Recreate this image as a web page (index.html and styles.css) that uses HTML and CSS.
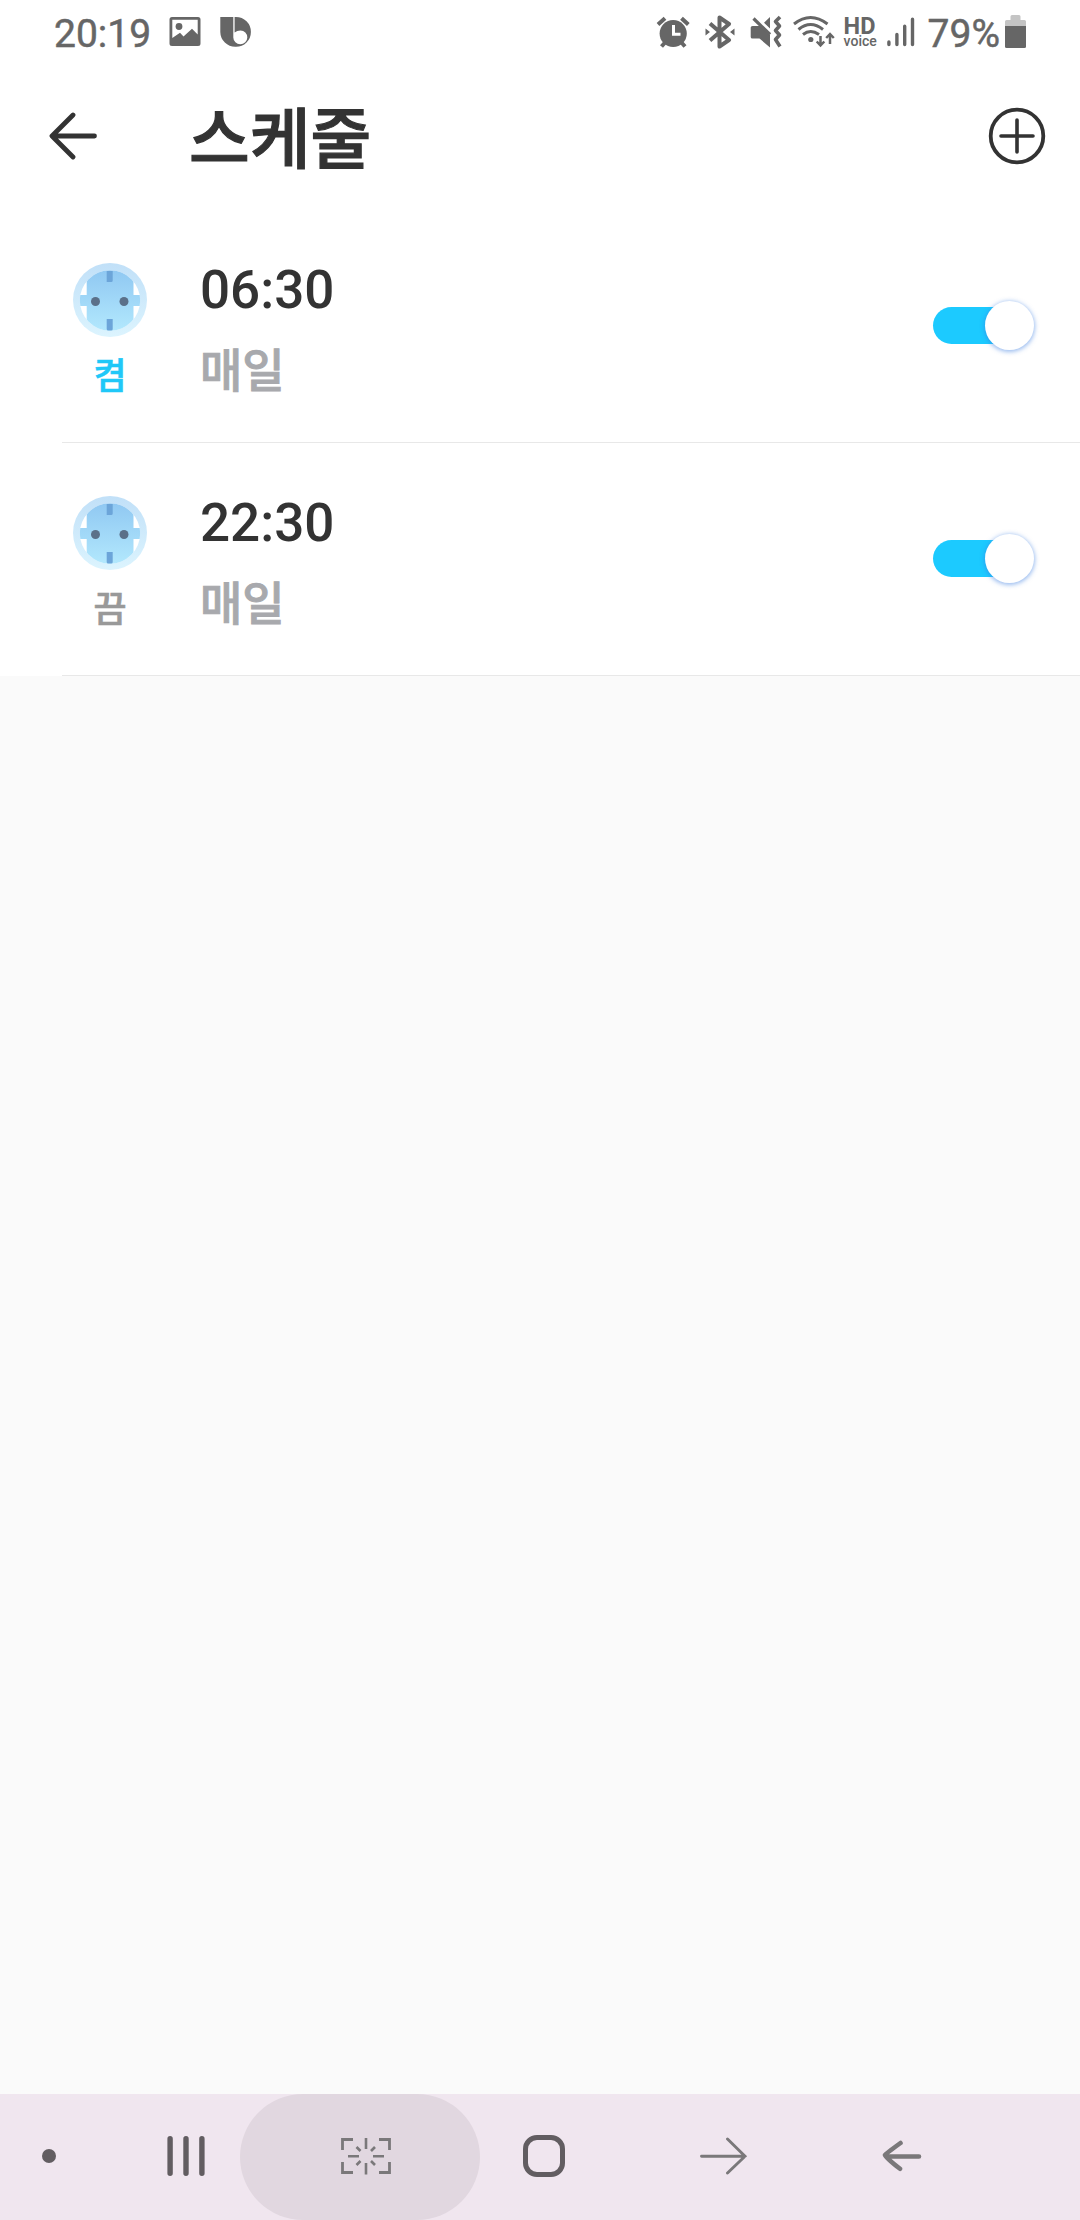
FILE: index.html
```html
<!DOCTYPE html>
<html lang="ko">
<head>
<meta charset="utf-8">
<title>스케줄</title>
<link rel="stylesheet" href="styles.css">
</head>
<body>
<div class="screen">
  <div class="status">
    <span class="status-text clock">20:19</span>
    <svg class="ic-image" width="32" height="30" viewBox="0 0 32 30"><path fill="#666" fill-rule="evenodd" d="M3 0H29Q31.500 0 31.500 2.500V26.500Q31.500 29 29 29H3Q.5 29 .5 26.500V2.500Q.5 0 3 0ZM3.300 2.800V21L11 15.700 14.500 19.500 23 11.800 28.700 17.500V2.800Z"/><circle cx="10" cy="9.500" r="3.400" fill="#666"/></svg>
    <svg class="ic-bixby" width="32" height="30" viewBox="0 0 32 30"><path fill="#666" d="M.3 0H16A14.900 14.900 0 0 1 16 29.800H15.500A15 15 0 0 1 .3 15Z"/><path fill="#fff" d="M13.300 0H14.600V15.500Q17 13.500 20.500 13.500A7 6.900 0 1 1 13.300 20.500Z"/></svg>
    <span class="spacer"></span>
    <svg class="ic-alarm" width="34" height="34" viewBox="0 0 34 34"><g fill="none" stroke="#666" stroke-width="4"><path d="M2 9.500 9 3.200M25.500 3.200 32.300 9.500M9.500 27 5.500 31.500M25 27 29 31.500"/></g><circle cx="17.200" cy="18.500" r="13.600" fill="#666"/><path d="M17.500 10V19.300H24.500" fill="none" stroke="#fff" stroke-width="3"/></svg>
    <svg class="ic-bt" width="30" height="34" viewBox="0 0 30 34"><path d="M5 8.500 24 25 14.500 31.500V2.500L24 9 5 25.500" fill="none" stroke="#666" stroke-width="4" stroke-linejoin="round"/><path fill="#666" d="M.5 13.500V20.500L5 17ZM29.500 13.500V20.500L25 17Z"/></svg>
    <svg class="ic-mute" width="32" height="34" viewBox="0 0 32 34"><path fill="#666" d="M2.500 11H10L20 20V32.500L9.500 23.500H2.500Q.7 23.500 .7 22V12.500Q.7 11 2.500 11ZM20 2V13.500L14 7.800Z"/><path d="M3.500 3.500 20 19.500" stroke="#666" stroke-width="3.200"/><path d="M30 2 25.500 6.500 29.500 11 25.500 15.500 29.500 20 25.500 24.500 30 31.500" fill="none" stroke="#666" stroke-width="3.600" stroke-linejoin="round"/></svg>
    <svg class="ic-wifi" width="43" height="34" viewBox="0 0 43 34"><g fill="none" stroke="#666" stroke-width="3"><path d="M1 9Q17.500-4 34.500 9M5.500 14.500Q17.500 4.500 30 14.500M10 19.500Q17.500 13.500 26 19.500"/><path d="M27.500 21V30M23.700 26.500 27.500 30.500 31.300 26.500M37 29V19.500M33.200 23 37 19 40.800 23" stroke-width="2.500"/></g><circle cx="17.800" cy="24.500" r="2.600" fill="#666"/></svg>
    <span class="hd"><b>HD</b><i>voice</i></span>
    <svg class="ic-signal" width="28" height="32" viewBox="0 0 28 32"><path d="M1.900 26V28.500M9.900 18.500V28.500M17.700 10.200V28.500M25.500 3.200V28.500" stroke="#666" stroke-width="3.400" stroke-linecap="round"/></svg>
    <span class="status-text">79%</span>
    <svg class="ic-battery" width="21" height="34" viewBox="0 0 21 34"><path fill="#c4c4c4" d="M5.500 5V1.500Q5.500 0 7 0H14Q15.500 0 15.500 1.500V5H19.500Q21 5 21 6.500V12H0V6.500Q0 5 1.500 5Z"/><path fill="#666" d="M0 11H21V31.500Q21 33 19.500 33H1.500Q0 33 0 31.500Z"/></svg>
  </div>

  <header class="header">
    <svg width="50" height="50" viewBox="0 0 50 50"><path d="M45.500 25H3.500M24 4 3 25 24 46" fill="none" stroke="#333" stroke-width="4.800" stroke-linecap="round" stroke-linejoin="round"/></svg>
    <h1 class="title">스케줄</h1>
    <svg width="58" height="58" viewBox="0 0 58 58"><circle cx="29" cy="29" r="26.300" fill="none" stroke="#333" stroke-width="3.800"/><path d="M29 13V45M13 29H45" stroke="#333" stroke-width="3.600" stroke-linecap="round"/></svg>
  </header>

  <svg class="defs" width="0" height="0"><defs>
    <linearGradient id="ring" x1="0" y1="0" x2="0" y2="1"><stop offset="0" stop-color="#c1e0f8"/><stop offset="1" stop-color="#dcf4fe"/></linearGradient>
    <linearGradient id="face" gradientUnits="userSpaceOnUse" x1="0" y1="7" x2="0" y2="68"><stop offset="0" stop-color="#90c8f2"/><stop offset="1" stop-color="#b2e8fd"/></linearGradient>
    <clipPath id="disc"><circle cx="37" cy="37.500" r="30.200"/></clipPath>
    <symbol id="socket" viewBox="0 0 74 74"><circle cx="37" cy="37" r="37" fill="url(#ring)"/><circle cx="37" cy="37.500" r="30.200" fill="#fff"/><g clip-path="url(#disc)"><path fill="url(#face)" d="M13.700 0H60.500V32H70V43H60.500V74H13.700V43H4V32H13.700Z"/></g><path fill="#6ca5d9" d="M33.700 8H39.700V17.500Q39.700 19 38.200 19H33.700ZM33.700 56H39.700V66Q39.700 67.500 38.200 67.500H35.200Q33.700 67.500 33.700 66Z"/><circle cx="22.500" cy="38.500" r="4.500" fill="#5b7089"/><circle cx="51" cy="38.500" r="4.500" fill="#5b7089"/></symbol>
  </defs></svg>

  <main class="list">
    <div class="row">
      <div class="device"><svg class="socket"><use href="#socket"/></svg><span class="state on">켬</span></div>
      <div class="info"><span class="time">06:30</span><span class="repeat">매일</span></div>
      <div class="toggle"><span class="knob"></span></div>
    </div>
    <div class="row">
      <div class="device"><svg class="socket"><use href="#socket"/></svg><span class="state">끔</span></div>
      <div class="info"><span class="time">22:30</span><span class="repeat">매일</span></div>
      <div class="toggle"><span class="knob"></span></div>
    </div>
  </main>

  <nav class="nav">
    <span class="dot"></span>
    <svg class="recents" width="38" height="40" viewBox="0 0 38 40"><path d="M3.100 2.800V37.200M19 2.800V37.200M34.900 2.800V37.200" stroke="#625d61" stroke-width="5.400" stroke-linecap="round"/></svg>
    <span class="pill"><svg width="52" height="38" viewBox="0 0 52 38"><g fill="none" stroke="#7a787a"><path stroke-width="2.800" d="M2.500 13V2.500H13M39 2.500H49.500V13M49.500 25V35.500H39M13 35.500H2.500V25"/><path stroke-width="2.600" d="M26 1V12M26 26V37.500M8 19.200H19M33 19.200H44M16.500 10 20.500 14M35 10 31 14M16.500 28 20.500 24M35 28 31 24"/></g></svg></span>
    <svg class="home" width="42" height="42" viewBox="0 0 42 42"><rect x="2.500" y="2.500" width="37" height="37" rx="11.500" fill="none" stroke="#625d61" stroke-width="5"/></svg>
    <svg class="forward" width="48" height="38" viewBox="0 0 48 38"><path d="M1.500 19.200H45M27.500 2 45 19.200 27.500 36" fill="none" stroke="#7a787a" stroke-width="2.900" stroke-linecap="round"/></svg>
    <svg class="back" width="40" height="32" viewBox="0 0 40 32"><path d="M37 16.500H5M18.500 3Q4 13.500 3 15Q4 18 18 28.800" fill="none" stroke="#7a787a" stroke-width="4.600" stroke-linecap="round" stroke-linejoin="round"/></svg>
  </nav>
</div>
</body>
</html>
```

FILE: styles.css
```css
* { box-sizing: border-box; }
body { margin: 0; }
svg { display: block; flex: none; }
.screen {
  width: 1080px;
  height: 2220px;
  display: flex;
  flex-direction: column;
  background: #fafafa;
  font-family: Roboto, "Noto Sans CJK KR", sans-serif;
  color: #333;
}

.status {
  height: 64px;
  flex: none;
  display: flex;
  align-items: flex-start;
  padding: 15px 54px 0;
  background: #fff;
  color: #666;
}
.status-text { font-size: 39px; font-weight: 400; line-height: 38px; -webkit-text-stroke: .5px; }
.clock { width: 115px; }
.ic-image { margin-top: 2px; }
.ic-bixby { margin: 2px 0 0 19px; }
.spacer { flex: 1; }
.ic-bt { margin-left: 15px; }
.ic-mute { margin-left: 15px; }
.ic-wifi { margin-left: 11px; }
.hd { width: 34px; margin: 1px 0 0 8px; display: flex; flex-direction: column; }
.hd b { font-size: 23.5px; font-weight: 700; line-height: 20px; }
.hd i { font-size: 14px; font-weight: 500; font-style: normal; line-height: 10px; }
.ic-signal { margin: 1px 13px 0 9px; }
.ic-battery { margin-left: 5px; }

.header {
  height: 146px;
  flex: none;
  display: flex;
  align-items: center;
  padding: 0 34px 3px 49px;
  background: #fff;
}
.title { flex: 1; margin: 10px 0 0 90px; font-size: 66px; font-weight: 500; line-height: 90px; -webkit-text-stroke: 1.2px; }

.defs { position: absolute; }
.list { flex: 1; }
.row {
  height: 233px;
  display: flex;
  align-items: flex-start;
  padding: 53px 45px 0 73px;
  background: linear-gradient(#e8e8e8, #e8e8e8) 62px 100% / 100% 1px no-repeat #fff;
}
.device { width: 74px; display: flex; flex-direction: column; align-items: center; }
.socket { width: 74px; height: 74px; }
.state { margin-top: 20px; font-size: 36px; font-weight: 500; line-height: 40px; color: #999; -webkit-text-stroke: .6px; }
.on { color: #20c8f8; }
.info { flex: 1; margin-left: 53px; display: flex; flex-direction: column; }
.time { padding-top: 1px; font-size: 53px; font-weight: 500; line-height: 52px; }
.repeat { margin-top: 27px; font-size: 46px; font-weight: 500; line-height: 56px; color: #a8a9ad; -webkit-text-stroke: .9px; }
.toggle {
  width: 102px;
  height: 37px;
  margin-top: 44px;
  display: flex;
  align-items: center;
  justify-content: flex-end;
  border-radius: 19px;
  background: linear-gradient(90deg, #1ccaff 80px, transparent 80px);
}
.knob {
  width: 49px;
  height: 49px;
  flex: none;
  margin-bottom: 1px;
  margin-right: 1px;
  border-radius: 50%;
  background: #fff;
  box-shadow: 0 1px 4px 1px rgba(60, 125, 225, .5);
}

.nav {
  height: 126px;
  flex: none;
  display: flex;
  align-items: center;
  padding-left: 42px;
  background: #f0e6ef;
}
.dot { width: 14px; height: 14px; margin-bottom: 2px; border-radius: 50%; background: #625d61; }
.recents { margin: 0 0 2px 111px; }
.pill {
  width: 240px;
  height: 126px;
  margin-left: 35px;
  display: flex;
  align-items: center;
  justify-content: center;
  padding: 0 0 2px 11px;
  border-radius: 63px;
  background: #e1d7e0;
}
.home { margin: 0 0 2px 43px; }
.forward { margin: 0 0 2px 135px; }
.back { margin: 0 0 2px 134px; }
```
